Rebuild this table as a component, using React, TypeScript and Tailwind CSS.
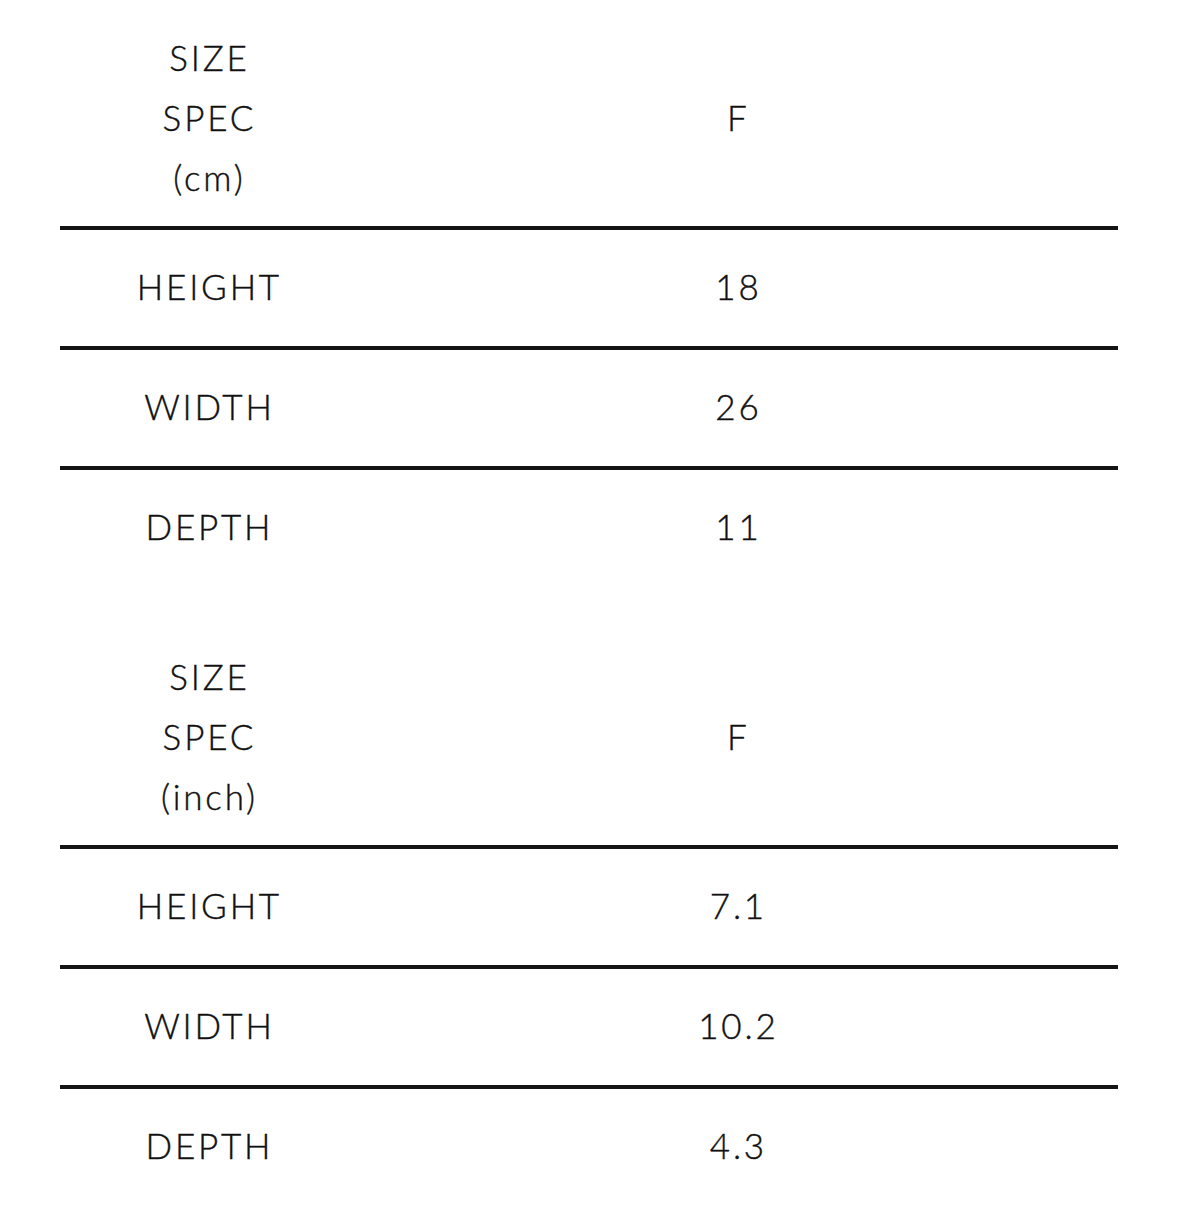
import React from 'react';

type Spec = { label: string; value: string };

const cmRows: Spec[] = [
  { label: 'HEIGHT', value: '18' },
  { label: 'WIDTH', value: '26' },
  { label: 'DEPTH', value: '11' },
];

const inchRows: Spec[] = [
  { label: 'HEIGHT', value: '7.1' },
  { label: 'WIDTH', value: '10.2' },
  { label: 'DEPTH', value: '4.3' },
];

// One size table: header row plus measurement rows
const SpecTable: React.FC<{ unit: string; rows: Spec[] }> = ({ unit, rows }) => (
  <div className="mx-[60px] w-[1058px]">
    <div className="flex border-b-4 border-[#141414] pt-[27px] pb-[19px]">
      <div className="w-[296px] flex flex-col items-center leading-[60px] pl-[0.08em]">
        <span>SIZE</span>
        <span>SPEC</span>
        <span>({unit})</span>
      </div>
      <div className="flex-1 flex items-center justify-center pl-[0.08em]">F</div>
    </div>
    {rows.map((r, i) => (
      <div
        key={r.label}
        className={
          i < rows.length - 1
            ? 'flex h-[120px] pb-[4px] items-center border-b-4 border-[#141414]'
            : 'flex h-[116px] pb-[4px] items-center'
        }
      >
        <div className="w-[296px] text-center pl-[0.08em]">{r.label}</div>
        <div className="flex-1 text-center pl-[0.08em]">{r.value}</div>
      </div>
    ))}
  </div>
);

const App: React.FC = () => {
  return (
    <div
      className="w-[1179px] h-[1226px] bg-white text-[#111111] text-[35px] font-light tracking-[0.08em] [-webkit-text-stroke:0.4px_#111111]"
      style={{ fontFamily: 'Lato, "Noto Sans", sans-serif' }}
    >
      <SpecTable unit="cm" rows={cmRows} />
      <div className="h-[33px]" />
      <SpecTable unit="inch" rows={inchRows} />
    </div>
  );
};

export default App;
